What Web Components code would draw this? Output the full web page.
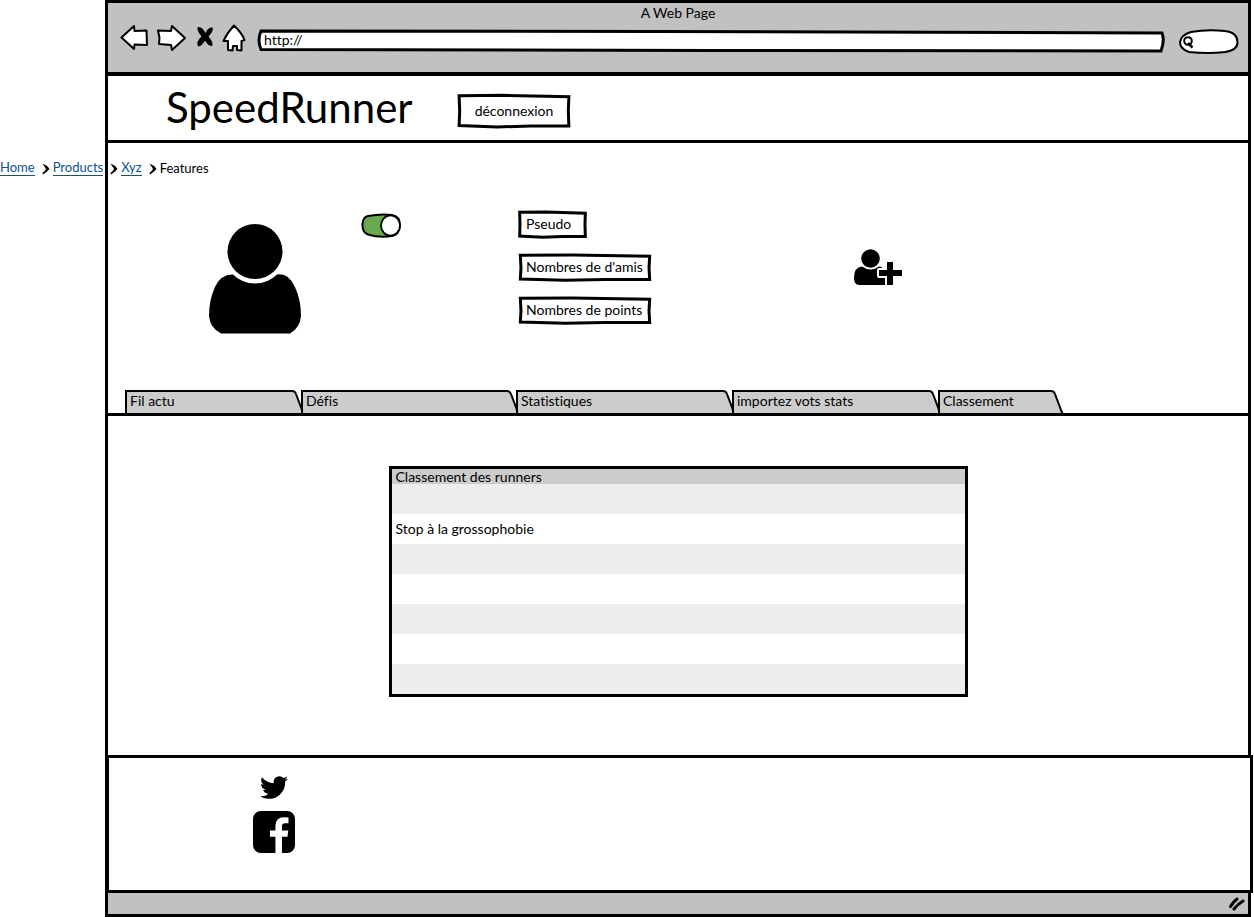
<!DOCTYPE html>
<html lang="fr">
<head>
<meta charset="utf-8">
<meta name="viewport" content="width=device-width, initial-scale=1">
<title>SpeedRunner</title>
<style>
  body { margin: 0; background: #fff; color: #000; font: 14px/20px Lato, "Open Sans", sans-serif; font-variant-ligatures: none; }
</style>
</head>
<body>
<mock-browser page-title="A Web Page" address="http://">
  <site-header name="SpeedRunner"></site-header>
  <bread-crumbs></bread-crumbs>
  <user-profile>
    <sketch-box>Pseudo</sketch-box>
    <sketch-box wide>Nombres de d'amis</sketch-box>
    <sketch-box wide>Nombres de points</sketch-box>
  </user-profile>
  <tab-bar></tab-bar>
  <ranking-panel></ranking-panel>
  <site-footer></site-footer>
</mock-browser>

<script>
const define = (name, html, setup) => {
  const template = document.createElement('template');
  template.innerHTML = `<style>*{box-sizing:border-box}:host{display:block}</style>${html}`;
  customElements.define(name, class extends HTMLElement {
    constructor() {
      super();
      this.attachShadow({ mode: 'open' }).append(template.content.cloneNode(true));
    }
    connectedCallback() { if (setup) setup(this, this.shadowRoot); }
  });
};

define('sketch-box', `
<style>
  :host { box-sizing: border-box; position: relative; width: 67px; padding: 3px 7px; height: 27px; white-space: nowrap; }
  :host([wide]) { width: 132px; }
  :host([large]) { width: 112px; height: 34px; padding: 0; }
  svg { position: absolute; inset: 0; width: 100%; height: 100%; overflow: visible; pointer-events: none; }
  path { fill: #fff; stroke: #000; stroke-width: 3; stroke-linejoin: miter; vector-effect: non-scaling-stroke; }
  .content { position: relative; height: 100%; }
</style>
<svg viewBox="0 0 100 100" preserveAspectRatio="none" aria-hidden="true"><path d="M1 5 L40 4 L99 8 L98.500 50 L99 94 L65 94 L35 97 L1 93 L1.500 50Z"/></svg>
<div class="content"><slot></slot></div>
`);

define('mock-browser', `
<style>
  :host { margin: 0 3px 0 105px; }
  .frame { border: solid #000; border-width: 3px 3px 0 3px; }
  .chrome { background: #c1c1c1; border-bottom: 4px solid #000; min-height: 73px; }
  .title { text-align: center; line-height: 20px; }
  .bar { display: flex; align-items: center; height: 30px; padding: 0 9px 0 12px; }
  button { flex: none; display: block; border: 0; padding: 0; background: none; }
  button svg { display: block; }
  .back { margin-right: 8px; }
  .next { margin-right: 10px; }
  .stop { margin-right: 8px; }
  .home { margin-right: 12px; }
  .address, .search { position: relative; margin-top: 6px; }
  .address { flex: 1; height: 22px; margin-right: 15px; }
  .search { flex: 0 0 60px; height: 25px; }
  .shape { position: absolute; inset: 0; width: 100%; height: 100%; overflow: visible; }
  .shape path { fill: #fff; stroke: #000; stroke-width: 2; vector-effect: non-scaling-stroke; }
  .address .shape path { stroke-width: 3; }
  .lens { position: absolute; left: 3px; top: 7px; }
  input { position: relative; display: block; width: 100%; height: 100%; border: 0; background: none; padding: 0 6px 4px; font: inherit; font-size: 14px; line-height: 18px; color: #000; outline: 0; }
  .search input { padding-left: 18px; }
  .status { background: #c1c1c1; border: 3px solid #000; border-top: 0; height: 24px; display: flex; justify-content: flex-end; align-items: center; padding-right: 3px; }
</style>
<div class="frame">
  <div class="chrome">
    <div class="title"></div>
    <form class="bar">
      <button type="button" class="back" aria-label="Précédent"><svg width="28" height="28" viewBox="0 0 28 28"><path d="M1.500 13.500 L14 2 L14.500 7 L26.500 6.500 L27 21 L14.500 20.500 L14 25 Z" fill="#fff" stroke="#000" stroke-width="2" stroke-linejoin="round"/></svg></button>
      <button type="button" class="next" aria-label="Suivant"><svg width="30" height="28" viewBox="0 0 30 28"><path d="M2 6.500 L15 7 L16 2 L29 14 L16 26 L15 21 L3 20 L3.500 14 Z" fill="#fff" stroke="#000" stroke-width="2" stroke-linejoin="round"/></svg></button>
      <button type="button" class="stop" aria-label="Arrêter"><svg width="18" height="28" viewBox="0 0 18 28"><path transform="translate(0 2)" d="M2 1 Q6 0 9.500 7 Q12 1 16.500 1.500 Q18 5 12.500 10.500 Q18 17 16 20 Q12 20 9 14.500 Q6 20 2.500 20.500 Q-1 17 5.500 10.500 Q0 4 2 1Z"/></svg></button>
      <button type="button" class="home" aria-label="Accueil"><svg width="24" height="28" viewBox="0 0 24 28"><path d="M12 1.500 Q20 9 22.500 16 L19.500 17 L19.500 26.500 L15 26 L15 22 L11 22 L10.500 26.500 L6 26 L6 17 L1.500 17 Q5 9 12 1.500Z" fill="#fff" stroke="#000" stroke-width="2" stroke-linejoin="round"/></svg></button>
      <div class="address"><svg class="shape" viewBox="0 0 906 22" preserveAspectRatio="none" aria-hidden="true"><path d="M3 1 L400 1.500 L904 3 Q907 10 903 21 L450 20.500 L3 19.500 Q-1 10 3 1Z"/></svg><input type="text" aria-label="Adresse"></div>
      <div class="search"><svg class="shape" viewBox="0 0 60 25" preserveAspectRatio="none" aria-hidden="true"><path d="M12 3 Q28 0 46 2 Q58 3 58.500 13 Q59 21 46 23 Q30 25 10 23 Q1 20 1 13 Q2 6 12 3Z"/></svg><svg class="lens" width="12" height="13" viewBox="0 0 12 13" aria-hidden="true"><circle cx="6" cy="5" r="3.800" fill="none" stroke="#000" stroke-width="2"/><path d="M6 7 L10.500 11.500" stroke="#000" stroke-width="2.500"/></svg><input type="search" aria-label="Rechercher"></div>
    </form>
  </div>
  <slot></slot>
</div>
<div class="status"><svg width="16" height="14" viewBox="0 0 16 14" aria-hidden="true"><path d="M1.500 9.500 Q4 5 8 2 M5 12 Q9 7 14 4" fill="none" stroke="#000" stroke-width="3" stroke-linecap="round"/></svg></div>
`, (host, root) => {
  root.querySelector('.title').textContent = host.getAttribute('page-title');
  root.querySelector('.address input').value = host.getAttribute('address');
});

define('site-header', `
<style>
  :host { border-bottom: 3px solid #000; }
  header { display: flex; align-items: center; min-height: 64px; padding: 6px 0 0 58px; }
  h1 { margin: 0; flex: 0 0 292px; padding-bottom: 8px; font-size: 42px; line-height: 48px; font-weight: 400; }
  button { display: block; width: 100%; height: 100%; border: 0; background: none; padding: 0; font: inherit; color: inherit; }
</style>
<header><h1></h1><sketch-box large><button type="button">déconnexion</button></sketch-box></header>
`, (host, root) => { root.querySelector('h1').textContent = host.getAttribute('name'); });

/* The trail starts at the window's edge, outside the frame. */
define('bread-crumbs', `
<style>
  :host { margin-left: -108px; padding-top: 15px; }
  ol { list-style: none; display: flex; align-items: center; margin: 0; padding: 0; font-size: 13px; line-height: 20px; position: relative; }
  li { display: flex; align-items: center; }
  a { color: #085299; text-decoration: none; line-height: 15px; border-bottom: 1px solid #085299; }
  svg { margin: 2px 3px 0 7px; }
</style>
<nav aria-label="Fil d'Ariane"><ol>
  <li><a href="#home">Home</a></li>
  <li><a href="#products">Products</a></li>
  <li><a href="#xyz">Xyz</a></li>
  <li aria-current="page">Features</li>
</ol></nav>
`, (host, root) => {
  root.querySelectorAll('li:not(:last-child)').forEach(li => li.insertAdjacentHTML('beforeend',
    '<svg width="8" height="12" viewBox="0 0 8 12" aria-hidden="true"><path d="M0.500 0.500 Q5 2 7.500 6 Q5 9 1 11.500 L0.500 10 Q3 8 4 6 Z"/></svg>'));
});

define('user-profile', `
<style>
  .grid { display: grid; grid-template-columns: 253px 158px 335px auto; align-items: start; padding: 33px 0 0; min-height: 212px; }
  .avatar { margin: 13px 0 0 101px; }
  input { appearance: none; display: block; margin: 0; width: 40px; height: 25px; background: none; }
  .switch { position: relative; display: block; margin-top: 2px; width: 40px; }
  .switch svg { position: absolute; left: 0; top: 0; pointer-events: none; }
  .facts { display: grid; gap: 16px; }
  button { border: 0; background: none; padding: 0; margin: 38px 0 0; justify-self: start; }
  svg { display: block; }
</style>
<div class="grid">
  <svg class="avatar" width="92" height="110" viewBox="0 0 92 110" role="img" aria-label="Utilisateur"><circle cx="46" cy="27.500" r="27.500"/><path d="M24 50.500 Q33 59.500 46 59.500 Q59 59.500 68 50.500 Q80 49 86 63 Q92 76 92 92 Q91 104 81 109.500 L12 109.500 Q1 104 0 92 Q0 76 6 63 Q12 50 24 50.500Z"/></svg>
  <label class="switch"><input type="checkbox" role="switch" checked aria-label="Activer"><svg width="40" height="25" viewBox="0 0 40 25" aria-hidden="true"><path d="M7 3 Q20 0.500 31 2 Q39 3 39 13 Q38 22 31 23 Q18 25 7 21.500 Q1 19 1.500 11 Q2 4 7 3Z" fill="#68a84e" stroke="#000" stroke-width="2"/><ellipse cx="29.500" cy="12.500" rx="9.500" ry="10.200" fill="#fff" stroke="#000" stroke-width="1.800"/></svg></label>
  <div class="facts"><slot></slot></div>
  <button type="button" aria-label="Ajouter un ami"><svg width="48" height="37" viewBox="0 0 48 37"><circle cx="16.500" cy="9.500" r="9.300"/><path d="M8 17.500 Q16.500 23.500 25 17.500 Q29 17.500 31 23 V36 H5 Q0 36 0 29 Q0 18 8 17.500Z"/><path d="M33 13 h6 v8 h9 v6 h-9 v9 h-6 v-9 h-8 v-6 h8z" fill="#fff" stroke="#fff" stroke-width="4" stroke-linejoin="round"/><path d="M33 13 h6 v8 h9 v6 h-9 v9 h-6 v-9 h-8 v-6 h8z"/></svg></button>
</div>
`);

define('tab-bar', `
<style>
  :host { border-bottom: 3px solid #000; }
  [role=tablist] { display: flex; padding-left: 17px; height: 23px; }
  button { position: relative; display: flex; border: 0; padding: 0; margin-right: -4px; background: none; font: inherit; color: inherit; text-align: left; height: 23px; }
  span { flex: 1; height: 23px; background: #ccc; border: solid #000; border-width: 2px 0 0 2px; padding-left: 3px; line-height: 18px; white-space: nowrap; }
  svg { display: block; flex: none; }
</style>
<div role="tablist"></div>
`, (host, root) => {
  const list = root.querySelector('[role=tablist]');
  if (list.children.length) return;
  [['Fil actu', 180], ['Défis', 219], ['Statistiques', 220], ['importez vots stats', 210], ['Classement', 126]].forEach(([text, width], i) => {
    const tab = document.createElement('button');
    tab.type = 'button';
    tab.setAttribute('role', 'tab');
    tab.setAttribute('aria-selected', String(i === 4));
    tab.style.width = width + 'px';
    tab.innerHTML = '<span></span><svg width="14" height="23" viewBox="0 0 14 23" aria-hidden="true"><path d="M0 1 H1 Q4 1 5 4 L12.500 23 H0Z" fill="#ccc"/><path d="M0 1 H1 Q4 1 5 4 L12.500 24" fill="none" stroke="#000" stroke-width="2"/></svg>';
    tab.firstChild.textContent = text;
    list.append(tab);
  });
});

define('ranking-panel', `
<style>
  :host { padding: 50px 20px 58px; }
  table { width: 100%; max-width: 579px; margin: 0 auto; border: 3px solid #000; border-spacing: 0; background: #fff; }
  th, td { padding: 0 4px; text-align: left; font-weight: 400; }
  th { height: 15px; line-height: 15px; background: #ccc; }
  td { height: 30px; }
  tbody tr:nth-child(odd) { background: #eee; }
</style>
<table>
  <thead><tr><th scope="col">Classement des runners</th></tr></thead>
  <tbody><tr><td></td></tr><tr><td>Stop à la grossophobie</td></tr><tr><td></td></tr><tr><td></td></tr><tr><td></td></tr><tr><td></td></tr><tr><td></td></tr></tbody>
</table>
`);

/* The footer box is drawn slightly wider than the frame around it. */
define('site-footer', `
<style>
  :host { position: relative; margin: 0 -5px 0 -2px; border: 3px solid #000; background: #fff; }
  footer { display: grid; justify-items: center; align-content: start; gap: 12px; width: 42px; margin-left: 144px; padding: 18px 0 37px; }
  a, svg { display: block; color: #000; }
</style>
<footer>
  <a href="#twitter" aria-label="Twitter"><svg width="28" height="23" viewBox="108 256 1576 1280"><path d="M1684 408q-67 98-162 167 1 14 1 42 0 130-38 259.500t-115.500 248.500-184.500 210.500-258 146-323 54.500q-271 0-496-145 35 4 78 4 225 0 401-138-105-2-188-64.500t-114-159.500q33 5 61 5 43 0 85-11-112-23-185.500-111.500t-73.500-205.500v-4q68 38 146 41-66-44-105-115t-39-154q0-88 44-163 121 149 294.500 238.500t371.500 99.500q-8-38-8-74 0-134 94.500-228.500t228.500-94.500q140 0 236 102 109-21 205-78-37 115-142 178 93-10 186-50z"/></svg></a>
  <a href="#facebook" aria-label="Facebook"><svg width="42" height="42" viewBox="128 128 1536 1536"><path d="M1376 128q119 0 203.500 84.500t84.500 203.500v960q0 119-84.500 203.500t-203.500 84.500h-188v-595h199l30-232h-229v-148q0-56 23.500-84t91.500-28l122-1v-207q-63-9-178-9-136 0-217.500 80t-81.500 226v171h-200v232h200v595h-532q-119 0-203.500-84.500t-84.500-203.500v-960q0-119 84.500-203.500t203.500-84.500h960z"/></svg></a>
</footer>
`);
</script>
</body>
</html>
